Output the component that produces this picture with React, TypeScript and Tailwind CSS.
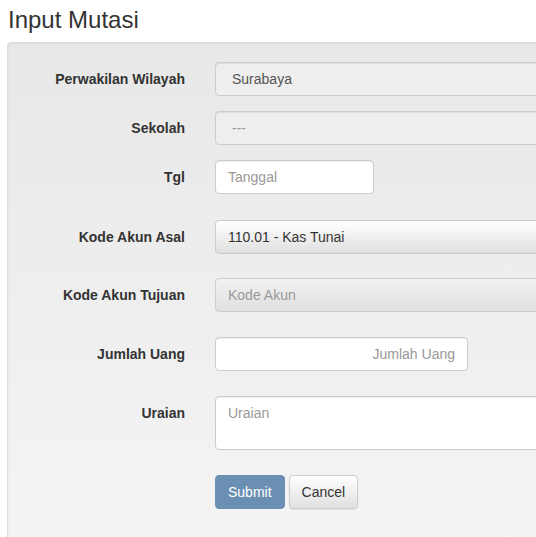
import React from "react";

const label = "w-[192px] shrink-0 pt-[7px] pr-[15px] text-right text-[14px] font-bold leading-5 text-[#333]";
const field = "h-[34px] rounded-[4px] border border-[#ccc] px-3 text-[14px] leading-5 flex items-center";

function Row({ name, mb, children }: { name: string; mb: string; children: React.ReactNode }) {
  return (
    <div className={`flex ${mb}`}>
      <label className={label}>{name}</label>
      <div className="flex-1 pl-[15px]">{children}</div>
    </div>
  );
}

export default function App() {
  return (
    <div className="h-[537px] overflow-hidden bg-white pl-[7px] [font-family:'Liberation_Sans',Arial,sans-serif]">
      <h3 className="ml-px mt-[7px] mb-[9px] text-[24px] leading-[26px] text-[#333]">Input Mutasi</h3>
      <div className="min-h-[540px] w-[560px] rounded-[4px] border border-[#dcdcdc] bg-gradient-to-b from-[#e8e8e8] to-[#f5f5f5] py-[19px] shadow-[inset_0_1px_3px_rgba(0,0,0,0.05)]">
        <Row name="Perwakilan Wilayah" mb="mb-[15px]">
          <div className={`${field} bg-[#eee] pl-4 text-[#555] shadow-[inset_0_1px_1px_rgba(0,0,0,0.075)]`}>Surabaya</div>
        </Row>
        <Row name="Sekolah" mb="mb-[15px]">
          <div className={`${field} bg-[#eee] pl-4 text-[#999] shadow-[inset_0_1px_1px_rgba(0,0,0,0.075)]`}>---</div>
        </Row>
        <Row name="Tgl" mb="mb-[26px]">
          <div className={`${field} w-[159px] bg-white text-[#999] shadow-[inset_0_1px_1px_rgba(0,0,0,0.075)]`}>Tanggal</div>
        </Row>
        <Row name="Kode Akun Asal" mb="mb-[24px]">
          <div className={`${field} bg-gradient-to-b from-white to-[#e0e0e0] text-[#333]`}>110.01 - Kas Tunai</div>
        </Row>
        <Row name="Kode Akun Tujuan" mb="mb-[25px]">
          <div className={`${field} bg-gradient-to-b from-[#f2f2f2] to-[#e0e0e0] text-[#999]`}>Kode Akun</div>
        </Row>
        <Row name="Jumlah Uang" mb="mb-[25px]">
          <div className={`${field} w-[253px] justify-end bg-white text-[#999] shadow-[inset_0_1px_1px_rgba(0,0,0,0.075)]`}>Jumlah Uang</div>
        </Row>
        <Row name="Uraian" mb="mb-[25px]">
          <div className="h-[54px] rounded-[4px] border border-[#ccc] bg-white px-3 py-[6px] text-[14px] leading-5 text-[#999] shadow-[inset_0_1px_1px_rgba(0,0,0,0.075)]">Uraian</div>
        </Row>
        <div className="flex">
          <div className="w-[192px] shrink-0" />
          <div className="flex gap-1 pl-[15px]">
            <button className="h-[34px] rounded-[4px] border border-[#6b8fb2] bg-[#6b8fb2] px-3 text-[14px] text-white">Submit</button>
            <button className="h-[34px] rounded-[4px] border border-[#ccc] bg-gradient-to-b from-white to-[#e0e0e0] px-3 text-[14px] text-[#333] shadow-[0_1px_1px_rgba(0,0,0,0.08)]">Cancel</button>
          </div>
        </div>
      </div>
    </div>
  );
}
